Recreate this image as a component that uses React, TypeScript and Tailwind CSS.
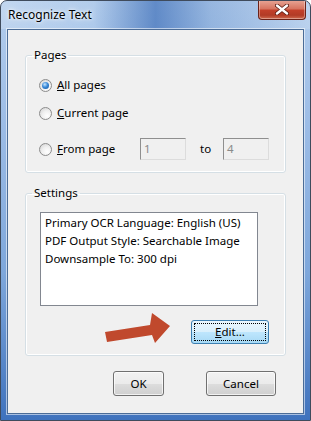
import React from 'react';

const Radio: React.FC<{ checked?: boolean }> = ({ checked }) => (
  <span className="flex h-[13px] w-[13px] shrink-0 items-center justify-center rounded-full border border-[#8c8c8c] bg-[radial-gradient(circle_at_65%_70%,#ffffff_0%,#f0f0f0_45%,#cfcfcf_100%)]">
    {checked && (
      <span className="h-[7px] w-[7px] rounded-full bg-[radial-gradient(circle_at_40%_35%,#c6e6ff_0%,#3b8ad8_45%,#0e4f98_100%)]" />
    )}
  </span>
);

const DisabledInput: React.FC<{ value: string }> = ({ value }) => (
  <div className="h-[22px] w-[46px] border border-t-[#8f8f8f] border-l-[#8f8f8f] border-r-[#dcdcdc] border-b-[#dcdcdc] bg-[#f0f0f0] pl-[3px] leading-[19px] text-[#8a8a8a]">
    {value}
  </div>
);

const PushButton: React.FC<{ width: string; children: React.ReactNode }> = ({ width, children }) => (
  <button
    className={`${width} h-[25px] rounded-[3px] border border-[#707070] bg-[linear-gradient(180deg,#f2f2f2_0%,#ebebeb_50%,#dddddd_51%,#cfcfcf_100%)] text-center text-black shadow-[inset_0_0_0_1px_rgba(255,255,255,0.7)]`}
  >
    {children}
  </button>
);

export default function App() {
  return (
    <div className="font-['Noto_Sans','Open_Sans',sans-serif] text-[11.5px] text-black">
      <div className="flex h-[421px] w-[311px] flex-col overflow-hidden rounded-t-[7px] border border-[#3f4b5c] bg-[linear-gradient(180deg,#b3cdec_0%,#9cbce6_30%,#7ea7db_65%,#3f72bd_100%)]">
        {/* title bar */}
        <div className="flex h-[28px] shrink-0 items-start justify-between bg-[linear-gradient(90deg,rgba(255,255,255,0.2)_0%,rgba(255,255,255,0)_30%,rgba(30,85,170,0.55)_50%,rgba(40,95,175,0.2)_68%,rgba(255,255,255,0.15)_100%)] pl-[7px]">
          <span className="pt-[6px] text-[12px] leading-[16px] [text-shadow:0_0_6px_#ffffff,0_0_3px_#ffffff]">
            Recognize Text
          </span>
          <div className="-mt-[1px] mr-[4px] flex h-[20px] w-[48px] items-center justify-center rounded-b-[4px] border border-t-0 border-[#6b2218] bg-[linear-gradient(180deg,#e8a797_0%,#d77561_45%,#c2402a_55%,#b23b26_80%,#cf6b4f_100%)] shadow-[inset_0_0_0_1px_rgba(255,255,255,0.35)]">
            <svg width="14" height="11" viewBox="0 0 14 11">
              <path d="M2 1.5 L12 9.5 M12 1.5 L2 9.5" stroke="#5a1a10" strokeWidth="4" strokeLinecap="round" />
              <path d="M2 1.5 L12 9.5 M12 1.5 L2 9.5" stroke="#ffffff" strokeWidth="2.4" strokeLinecap="round" />
            </svg>
          </div>
        </div>

        {/* client area */}
        <div className="mx-[6px] mb-[6px] flex flex-1 flex-col border border-[#4b6c97] bg-[#f0f0f0] pl-[17px] shadow-[0_0_0_1px_rgba(255,255,255,0.55)]">
          <fieldset className="mt-[17px] w-[261px] rounded-[3px] border border-[#d5dfe5] shadow-[inset_0_0_0_1px_#ffffff]">
            <legend className="ml-[6px] px-[2px] leading-[16px]">Pages</legend>
            <div className="flex flex-col pb-[12px] pl-[13px] pt-[12px]">
              <div className="flex h-[20px] items-center gap-[5px]">
                <Radio checked />
                <span>
                  <span className="underline">A</span>ll pages
                </span>
              </div>
              <div className="mt-[8px] flex h-[20px] items-center gap-[5px]">
                <Radio />
                <span>
                  <span className="underline">C</span>urrent page
                </span>
              </div>
              <div className="mt-[15px] flex h-[22px] items-center">
                <Radio />
                <span className="ml-[5px] w-[83px]">
                  <span className="underline">F</span>rom page
                </span>
                <DisabledInput value="1" />
                <span className="ml-[14px] w-[23px]">to</span>
                <DisabledInput value="4" />
              </div>
            </div>
          </fieldset>

          <fieldset className="mt-[12px] w-[261px] rounded-[3px] border border-[#d5dfe5] shadow-[inset_0_0_0_1px_#ffffff]">
            <legend className="ml-[6px] px-[2px] leading-[16px]">Settings</legend>
            <div className="flex flex-col pb-[10px] pl-[14px] pt-[11px]">
              <div className="h-[94px] w-[218px] border border-[#828790] bg-white px-[4px] py-[1px] leading-[18px]">
                <div>Primary OCR Language: English (US)</div>
                <div>PDF Output Style: Searchable Image</div>
                <div>Downsample To: 300 dpi</div>
              </div>
              <div className="mt-[14px] flex items-start">
                <svg className="-mt-[9px] ml-[64px]" width="68" height="34" viewBox="0 0 68 34">
                  <polygon points="1,21 3,31 48,24 51,32 66,15 48,2 46,14" fill="#c0492d" />
                </svg>
                <button className="ml-[19px] h-[24px] w-[78px] rounded-[3px] border border-[#3c7fb1] bg-[linear-gradient(180deg,#eaf6fd_0%,#d9f0fc_50%,#bee6fd_51%,#a7d9f5_100%)] text-center outline-1 -outline-offset-4 outline-dotted outline-black">
                  <span className="underline">E</span>dit...
                </button>
              </div>
            </div>
          </fieldset>

          <div className="mt-[15px] flex justify-end gap-[42px] pr-[27px]">
            <PushButton width="w-[51px]">OK</PushButton>
            <PushButton width="w-[70px]">Cancel</PushButton>
          </div>
        </div>
      </div>
    </div>
  );
}
